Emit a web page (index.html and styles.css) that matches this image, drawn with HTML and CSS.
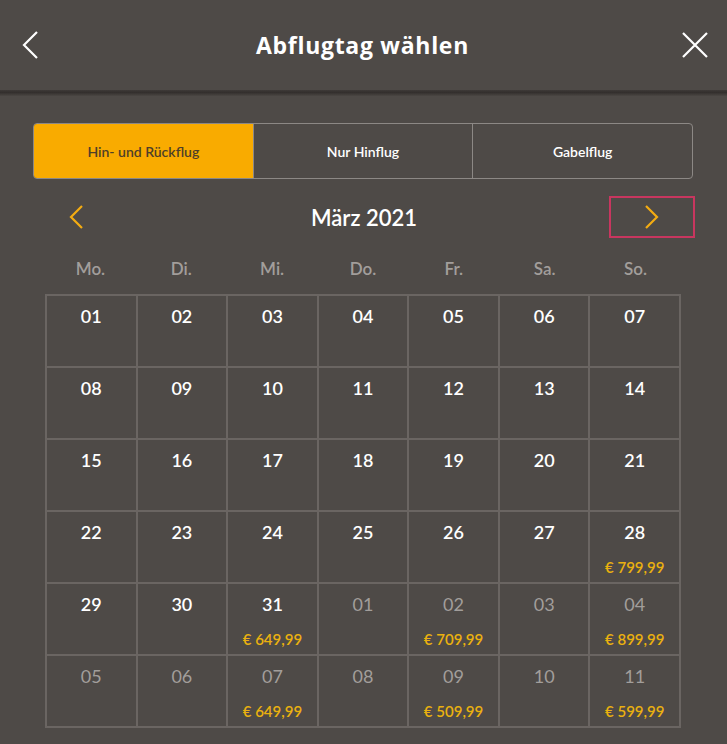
FILE: index.html
```html
<!DOCTYPE html>
<html lang="de">

<head>
    <meta charset="UTF-8">
    <meta name="viewport" content="width=device-width, initial-scale=1.0">
    <title>Abflugtag wählen</title>
    <link rel="stylesheet" href="styles.css">
</head>

<body>
    <!-- Top bar -->
    <header class="topbar">
        <button class="icon-btn" aria-label="Zurück">
            <svg width="20" height="30" viewBox="0 0 20 30"><path d="M17 2 L4 15 L17 28" fill="none" stroke="#fff" stroke-width="2.2"/></svg>
        </button>
        <h1>Abflugtag wählen</h1>
        <button class="icon-btn" aria-label="Schließen">
            <svg width="28" height="28" viewBox="0 0 28 28"><path d="M2 2 L26 26 M26 2 L2 26" fill="none" stroke="#fff" stroke-width="2.2"/></svg>
        </button>
    </header>
    <div class="shadow"></div>

    <main class="content">
        <!-- Trip type tabs -->
        <div class="tabs">
            <div class="tab active">Hin- und Rückflug</div>
            <div class="tab">Nur Hinflug</div>
            <div class="tab">Gabelflug</div>
        </div>

        <!-- Month navigation -->
        <div class="month-nav">
            <div class="nav-btn">
                <svg width="16" height="26" viewBox="0 0 16 26"><path d="M14 2 L3 13 L14 24" fill="none" stroke="#f3ac12" stroke-width="2.2"/></svg>
            </div>
            <div class="month-title">März 2021</div>
            <div class="nav-btn focused">
                <svg width="16" height="26" viewBox="0 0 16 26"><path d="M2 2 L13 13 L2 24" fill="none" stroke="#f3ac12" stroke-width="2.2"/></svg>
            </div>
        </div>

        <!-- Calendar -->
        <div class="weekdays">
            <div>Mo.</div><div>Di.</div><div>Mi.</div><div>Do.</div><div>Fr.</div><div>Sa.</div><div>So.</div>
        </div>
        <div class="grid" id="grid"></div>
    </main>

    <script>
        // Days shown in the grid: [label, muted, price]
        let days = [
            ['01'], ['02'], ['03'], ['04'], ['05'], ['06'], ['07'],
            ['08'], ['09'], ['10'], ['11'], ['12'], ['13'], ['14'],
            ['15'], ['16'], ['17'], ['18'], ['19'], ['20'], ['21'],
            ['22'], ['23'], ['24'], ['25'], ['26'], ['27'], ['28', false, '€ 799,99'],
            ['29'], ['30'], ['31', false, '€ 649,99'], ['01', true], ['02', true, '€ 709,99'], ['03', true], ['04', true, '€ 899,99'],
            ['05', true], ['06', true], ['07', true, '€ 649,99'], ['08', true], ['09', true, '€ 509,99'], ['10', true], ['11', true, '€ 599,99']
        ];

        let grid = document.getElementById('grid');
        for (let d of days) {
            let cell = document.createElement('div');
            cell.className = 'day' + (d[1] ? ' muted' : '');
            cell.innerHTML = '<span class="num">' + d[0] + '</span>' +
                (d[2] ? '<span class="price">' + d[2] + '</span>' : '');
            grid.appendChild(cell);
        }
    </script>
</body>

</html>
```

FILE: styles.css
```css
/* Page */
body {
    margin: 0;
    background-color: #4e4a47;
    font-family: 'Lato', 'Open Sans', sans-serif;
    color: #fff;
    width: 727px;
    height: 744px;
    overflow: hidden;
}

/* Top bar */
.topbar {
    height: 90px;
    display: flex;
    align-items: center;
    justify-content: space-between;
    padding: 0 18px 0 16px;
}

.topbar h1 {
    margin: 0;
    font-family: 'Open Sans', 'Lato', sans-serif;
    font-size: 23px;
    font-weight: 700;
    letter-spacing: 0.7px;
}

.icon-btn {
    background: none;
    border: none;
    padding: 0;
    width: 28px;
    height: 30px;
    display: flex;
    align-items: center;
    justify-content: center;
}

.shadow {
    height: 6px;
    background: linear-gradient(#3e3a38, #332f2d 40%, #4a4643);
}

.content {
    padding: 27px 32px 0 33px;
}

/* Tabs */
.tabs {
    display: flex;
    width: 658px;
    height: 54px;
    border: 1px solid #8c8885;
    border-radius: 4px;
    overflow: hidden;
}

.tab {
    flex: 1;
    display: flex;
    align-items: center;
    justify-content: center;
    font-size: 14px;
    font-weight: 600;
    border-left: 1px solid #8c8885;
}

.tab:first-child {
    border-left: none;
}

.tab.active {
    background-color: #f9ab00;
    color: #4e3f28;
}

/* Month navigation */
.month-nav {
    display: flex;
    align-items: center;
    justify-content: space-between;
    margin-top: 17px;
    width: 662px;
}

.nav-btn {
    width: 82px;
    height: 38px;
    border: 2px solid transparent;
    display: flex;
    align-items: center;
    justify-content: center;
}

.nav-btn.focused {
    border-color: #c8365f;
}

.month-title {
    font-size: 22px;
    font-weight: 600;
}

/* Weekdays */
.weekdays,
.grid {
    display: grid;
    grid-template-columns: repeat(7, 1fr);
    width: 636px;
    margin-left: 12px;
}

.weekdays {
    height: 56px;
    padding-top: 4px;
    box-sizing: border-box;
    align-items: center;
    text-align: center;
    color: #a29e9b;
    font-size: 17px;
    font-weight: 600;
}

/* Calendar grid */
.grid {
    border-top: 2px solid #6a6562;
    border-left: 2px solid #6a6562;
    box-sizing: border-box;
}

.day {
    height: 70px;
    border-right: 2px solid #6a6562;
    border-bottom: 2px solid #6a6562;
    display: flex;
    flex-direction: column;
    align-items: center;
}

.day .num {
    margin-top: 9px;
    font-size: 18px;
    font-weight: 600;
}

.day.muted .num {
    color: #a29e9b;
    font-weight: 400;
}

.day .price {
    margin-top: auto;
    margin-bottom: 6px;
    font-size: 15px;
    font-weight: 600;
    color: #eab10f;
}
```
